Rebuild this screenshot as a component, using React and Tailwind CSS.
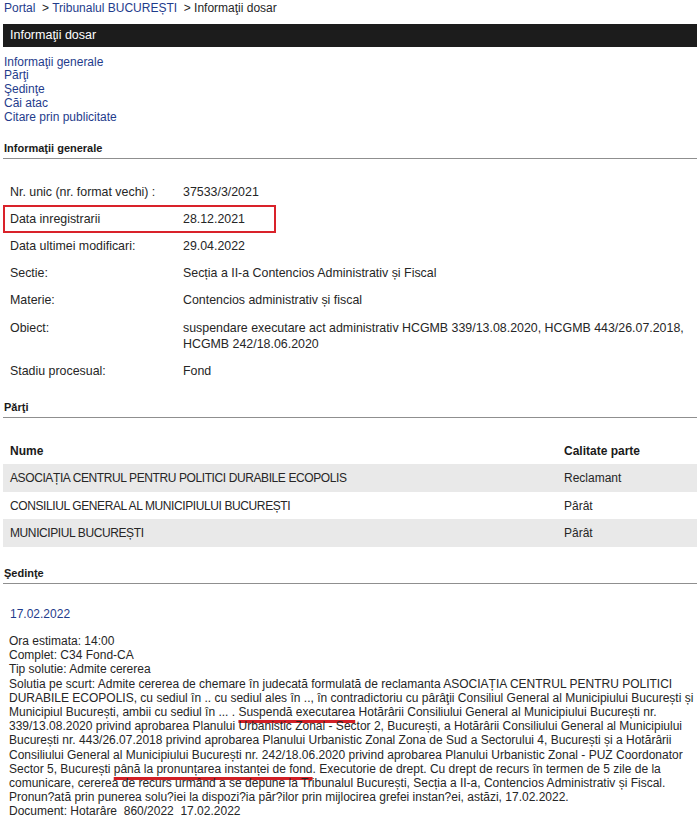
export default function App() {
  const link = "text-[#1f3c8c]";
  const infoRows = [
    ["Nr. unic (nr. format vechi) :", "37533/3/2021"],
    ["Data inregistrarii", "28.12.2021", true],
    ["Data ultimei modificari:", "29.04.2022"],
    ["Sectie:", "Secția a II-a Contencios Administrativ și Fiscal"],
    ["Materie:", "Contencios administrativ și fiscal"],
    [
      "Obiect:",
      <>
        suspendare executare act administrativ HCGMB 339/13.08.2020, HCGMB 443/26.07.2018,
        <br />
        HCGMB 242/18.06.2020
      </>,
    ],
    ["Stadiu procesual:", "Fond"],
  ];
  const parti = [
    ["ASOCIAȚIA CENTRUL PENTRU POLITICI DURABILE ECOPOLIS", "Reclamant", true],
    ["CONSILIUL GENERAL AL MUNICIPIULUI BUCUREȘTI", "Pârât", false],
    ["MUNICIPIUL BUCUREȘTI", "Pârât", true],
  ];
  const red = "underline decoration-[#d11f26] decoration-[2.5px] underline-offset-[4px]";
  return (
    <div className="w-[700px] min-h-[829px] bg-white px-[3px] font-['Liberation_Sans',Arial,sans-serif] text-[#262626]">
      {/* breadcrumb */}
      <div className="pt-[1px] pl-[1px] text-[12px] leading-[14px] whitespace-pre">
        <span className={link}>Portal</span>
        <span>{"  > "}</span>
        <span className={link}>Tribunalul BUCUREȘTI</span>
        <span>{"  > Informaţii dosar"}</span>
      </div>

      {/* black bar */}
      <div className="mt-[9px] h-[23px] bg-[#1c1c1c] pl-[7px] text-[12.5px] leading-[23px] text-white">
        Informaţii dosar
      </div>

      {/* nav */}
      <div className={`mt-[8.5px] pl-[1px] flex flex-col text-[12px] leading-[13.9px] ${link}`}>
        <span>Informaţii generale</span>
        <span>Părţi</span>
        <span>Şedinţe</span>
        <span>Căi atac</span>
        <span>Citare prin publicitate</span>
      </div>

      {/* Informatii generale */}
      <div className="mt-[16px] pl-[1px] pb-[3px] border-b border-[#8f8f8f] text-[11px] font-bold leading-[14px] text-[#1a1a1a]">
        Informaţii generale
      </div>
      <div className="mt-[19px] text-[12.4px]">
        {infoRows.map(([label, value, boxed], i) => (
          <div key={i} className="relative grid grid-cols-[180px_1fr] py-[5.6px] leading-[16px]">
            <div className="pl-[7px]">{label}</div>
            <div>{value}</div>
            {boxed && (
              <div className="absolute left-0 top-[0px] w-[273px] h-[28px] border-2 border-[#d9222a]" />
            )}
          </div>
        ))}
      </div>

      {/* Parti */}
      <div className="mt-[15.6px] pl-[1px] pb-[3px] border-b border-[#8f8f8f] text-[11px] font-bold leading-[14px] text-[#1a1a1a]">
        Părţi
      </div>
      <div className="mt-[19.5px] text-[12px]">
        <div className="grid grid-cols-[554px_1fr] h-[27px] items-center font-bold text-[#1a1a1a]">
          <div className="pl-[7px]">Nume</div>
          <div className="pl-[7px]">Calitate parte</div>
        </div>
        {parti.map(([n, c, g], i) => (
          <div
            key={i}
            className={`grid grid-cols-[554px_1fr] h-[27.5px] items-center ${g ? "bg-[#e9e9e9]" : "bg-white"}`}
          >
            <div className="pl-[7px] tracking-[-0.4px]">{n}</div>
            <div className="pl-[7px]">{c}</div>
          </div>
        ))}
      </div>

      {/* Sedinte */}
      <div className="mt-[19px] pl-[1px] pb-[3px] border-b border-[#8f8f8f] text-[11px] font-bold leading-[14px] text-[#1a1a1a]">
        Şedinţe
      </div>
      <div className={`mt-[22px] pl-[7px] text-[12px] leading-[16px] ${link}`}>17.02.2022</div>
      <div className="mt-[12px] pl-[6px] text-[12px] leading-[14.2px] whitespace-nowrap">
        Ora estimata: 14:00
        <br />
        Complet: C34 Fond-CA
        <br />
        Tip solutie: Admite cererea
        <br />
        Solutia pe scurt: Admite cererea de chemare în judecată formulată de reclamanta ASOCIAȚIA CENTRUL PENTRU POLITICI
        <br />
        DURABILE ECOPOLIS, cu sediul în .. cu sediul ales în .., în contradictoriu cu pârâţii Consiliul General al Municipiului București și
        <br />
        Municipiul București, ambii cu sediul în ... . <span className={red}>Suspendă executarea</span> Hotărârii Consiliului General al Municipiului București nr.
        <br />
        339/13.08.2020 privind aprobarea Planului Urbanistic Zonal - Sector 2, București, a Hotărârii Consiliului General al Municipiului
        <br />
        București nr. 443/26.07.2018 privind aprobarea Planului Urbanistic Zonal Zona de Sud a Sectorului 4, București și a Hotărârii
        <br />
        Consiliului General al Municipiului București nr. 242/18.06.2020 privind aprobarea Planului Urbanistic Zonal - PUZ Coordonator
        <br />
        Sector 5, București <span className={red}>până la pronunțarea instanței de fond</span>. Executorie de drept. Cu drept de recurs în termen de 5 zile de la
        <br />
        comunicare, cererea de recurs urmând a se depune la Tribunalul București, Secția a II-a, Contencios Administrativ și Fiscal.
        <br />
        Pronun?ată prin punerea solu?iei la dispozi?ia păr?ilor prin mijlocirea grefei instan?ei, astăzi, 17.02.2022.
        <br />
        <span className="whitespace-pre">Document: Hotarâre  860/2022  17.02.2022</span>
      </div>
    </div>
  );
}
